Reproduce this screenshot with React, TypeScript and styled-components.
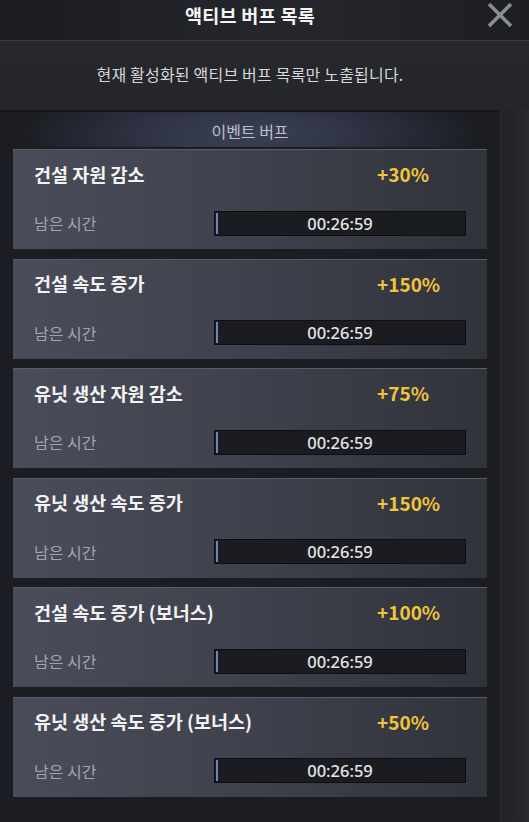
import React from "react";
import styled, { createGlobalStyle } from "styled-components";

const Global = createGlobalStyle`
  html, body { margin: 0; padding: 0; background: #1b1d21; }
  body { font-family: "Noto Sans CJK KR", "Noto Sans", sans-serif; }
  * { box-sizing: border-box; }
`;

const Page = styled.div`
  width: 529px;
  height: 822px;
  display: flex;
  flex-direction: column;
  background: #1b1d21;
  overflow: hidden;
`;

const Header = styled.div`
  height: 41px;
  flex: none;
  display: flex;
  align-items: center;
  justify-content: center;
  position: relative;
  padding-right: 29px;
  background: linear-gradient(90deg, #1a1c21 0%, #25272c 55%, #1c1e23 100%);
  border-bottom: 1px solid #3a3c43;
`;

const Title = styled.div`
  color: #f4f4f4;
  font-size: 18.5px;
  font-weight: 700;
  margin-top: -10px;
  letter-spacing: 0.3px;
`;

const Close = styled.div`
  position: absolute;
  right: 15px;
  top: 1px;
  width: 28px;
  height: 28px;
`;

const Notice = styled.div`
  height: 69px;
  flex: none;
  display: flex;
  align-items: center;
  justify-content: center;
  color: #d6d7da;
  font-size: 16px;
  background: linear-gradient(180deg, #26282d 0%, #24262b 100%);
  padding: 0 29px 3px 0;
  letter-spacing: 0.2px;
`;

const Body = styled.div`
  flex: 1;
  display: flex;
  background: #22242a;
`;

const Panel = styled.div`
  width: 500px;
  background: #1b1d22;
  display: flex;
  flex-direction: column;
`;

const Side = styled.div`
  flex: 1;
  background: linear-gradient(90deg, #1f2126 0%, #24262b 60%, #2a2c31 100%);
  border-left: 1px solid #2b2d33;
`;

const Tab = styled.div`
  height: 37px;
  display: flex;
  align-items: center;
  justify-content: center;
  color: #bcc0cc;
  font-size: 16px;
  background: radial-gradient(ellipse 230px 60px at 50% 65%, #3a3f52 0%, #33374a 35%, #262935 72%, #1b1d22 100%);
  border-top: 2px solid #16181c;
  padding-top: 2px;
`;

const List = styled.div`
  display: flex;
  flex-direction: column;
  gap: 9.5px;
  padding: 2px 13px 0 13px;
`;

const Card = styled.div`
  height: 100px;
  display: flex;
  flex-direction: column;
  background: linear-gradient(90deg, #4a4d59 0%, #40434e 45%, #30333a 100%);
  border-top: 1px solid #5a5d68;
  padding: 0 21px;
`;

const Row = styled.div<{ $h: number }>`
  display: flex;
  align-items: center;
  height: ${(p) => p.$h}px;
`;

const Name = styled.div`
  flex: 1;
  color: #f3f3f4;
  font-size: 18.5px;
  font-weight: 700;
`;

const Value = styled.div`
  width: 89px;
  color: #f1c43d;
  font-size: 19px;
  font-weight: 700;
`;

const Label = styled.div`
  width: 180px;
  color: #a2a4ad;
  font-size: 16px;
`;

const Bar = styled.div`
  position: relative;
  width: 252px;
  height: 25px;
  background: #1b1c21;
  border: 1px solid #0d0e11;
  display: flex;
  align-items: center;
  justify-content: center;
  color: #e4e4e6;
  font-size: 16.5px;
  font-family: "Noto Sans", "Noto Sans CJK KR", sans-serif;
  font-weight: 500;
`;

const Fill = styled.div`
  position: absolute;
  left: 1px;
  top: 1px;
  bottom: 1px;
  width: 2px;
  background: #6f86b8;
`;

const buffs = [
  { name: "건설 자원 감소", value: "+30%" },
  { name: "건설 속도 증가", value: "+150%" },
  { name: "유닛 생산 자원 감소", value: "+75%" },
  { name: "유닛 생산 속도 증가", value: "+150%" },
  { name: "건설 속도 증가 (보너스)", value: "+100%" },
  { name: "유닛 생산 속도 증가 (보너스)", value: "+50%" },
];

export default function App() {
  return (
    <Page>
      <Global />
      <Header>
        <Title>액티브 버프 목록</Title>
        <Close>
          <svg width="28" height="28" viewBox="0 0 28 28">
            <path d="M3 3 L25 25 M25 3 L3 25" stroke="#8b8d95" strokeWidth="3.6" />
          </svg>
        </Close>
      </Header>
      <Notice>현재 활성화된 액티브 버프 목록만 노출됩니다.</Notice>
      <Body>
        <Panel>
          <Tab>이벤트 버프</Tab>
          <List>
            {buffs.map((b, i) => (
              <Card key={i}>
                <Row $h={48}>
                  <Name>{b.name}</Name>
                  <Value>{b.value}</Value>
                </Row>
                <Row $h={52}>
                  <Label>남은 시간</Label>
                  <Bar>
                    <Fill />
                    00:26:59
                  </Bar>
                </Row>
              </Card>
            ))}
          </List>
        </Panel>
        <Side />
      </Body>
    </Page>
  );
}
